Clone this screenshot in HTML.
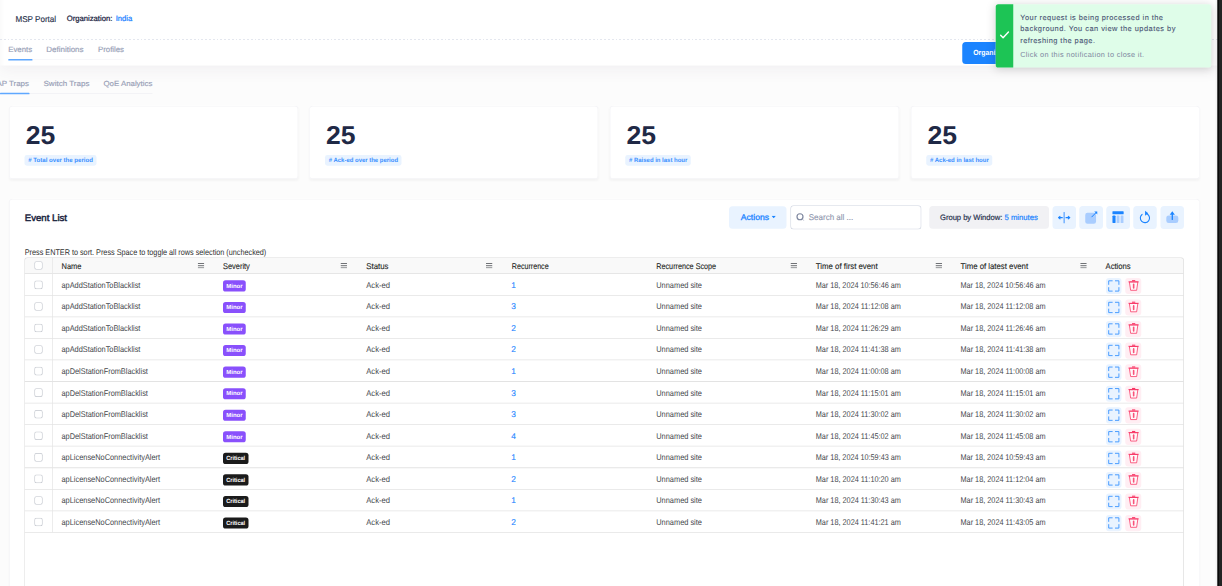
<!DOCTYPE html>
<html lang="en"><head><meta charset="utf-8"><title>MSP Portal - Events</title>
<style>
html,body{margin:0;padding:0;width:1222px;height:586px;overflow:hidden;background:#fcfcfc;}
body{font-family:"Liberation Sans",sans-serif;-webkit-font-smoothing:antialiased;}
#s{position:absolute;left:0;top:0;width:4888px;height:2344px;transform:scale(0.25);transform-origin:0 0;overflow:hidden;background:#fcfcfc;}
.b{position:absolute;box-sizing:border-box;display:block;}
.t{position:absolute;white-space:pre;line-height:1;display:block;transform-origin:0 100%;}
</style></head><body><div id="s">
<div class="b" style="left:0px;top:0px;width:4872px;height:262px;background:#fff;box-shadow:0 20px 56px rgba(82,63,105,.06);"></div>
<div class="b" style="left:0px;top:0px;width:18px;height:262px;background:linear-gradient(90deg,rgba(0,0,0,.018),rgba(0,0,0,0));"></div>
<div class="b" style="left:0px;top:156px;width:4872px;height:2.8px;background:repeating-linear-gradient(90deg,#dbdfe9 0 7.6px,transparent 7.6px 15.2px);"></div>
<span class="t" style="left:62.4px;top:59px;font-size:34px;color:#252f4a;transform:skewX(-0.3deg) scaleX(0.9479);-webkit-text-stroke:0.56px #252f4a;">MSP Portal</span>
<span class="t" style="left:267.2px;top:57.9px;font-size:31.2px;color:#1a2340;transform:skewX(-0.3deg) scaleX(0.9829);-webkit-text-stroke:0.96px #1a2340;">Organization:</span>
<span class="t" style="left:463.2px;top:57.9px;font-size:31.2px;color:#1b84ff;transform:skewX(-0.3deg) scaleX(0.9755);-webkit-text-stroke:0.96px #1b84ff;">India</span>
<div class="b" style="left:32.8px;top:237.6px;width:465.2px;height:2.8px;background:#f1f1f4;"></div>
<div class="b" style="left:32.8px;top:235.6px;width:97.2px;height:6.8px;background:#5fa8ff;border-radius:2.4px;"></div>
<span class="t" style="left:32.8px;top:182.1px;font-size:30.8px;color:#99a1b7;transform:skewX(-0.3deg) scaleX(1.0110);-webkit-text-stroke:0.64px #99a1b7;">Events</span>
<span class="t" style="left:184.8px;top:182.1px;font-size:30.8px;color:#99a1b7;transform:skewX(-0.3deg) scaleX(1.0375);-webkit-text-stroke:0.64px #99a1b7;">Definitions</span>
<span class="t" style="left:392px;top:182.1px;font-size:30.8px;color:#99a1b7;transform:skewX(-0.3deg) scaleX(1.0126);-webkit-text-stroke:0.64px #99a1b7;">Profiles</span>
<div class="b" style="left:0px;top:372.4px;width:610px;height:2.8px;background:#f1f1f4;"></div>
<div class="b" style="left:0px;top:370.8px;width:117.6px;height:6px;background:#5fa8ff;border-radius:2.4px;"></div>
<span class="t" style="left:-13.6px;top:318.7px;font-size:29.6px;color:#99a1b7;transform:skewX(-0.3deg) scaleX(1.0693);-webkit-text-stroke:0.64px #99a1b7;">AP Traps</span>
<span class="t" style="left:173.6px;top:318.7px;font-size:29.6px;color:#99a1b7;transform:skewX(-0.3deg) scaleX(1.0836);-webkit-text-stroke:0.64px #99a1b7;">Switch Traps</span>
<span class="t" style="left:414px;top:318.7px;font-size:29.6px;color:#99a1b7;transform:skewX(-0.3deg) scaleX(1.0594);-webkit-text-stroke:0.64px #99a1b7;">QoE Analytics</span>
<div class="b" style="left:3848.8px;top:168px;width:311.2px;height:88px;background:#1b84ff;border-radius:14px;"></div>
<span class="t" style="left:3892.8px;top:194.7px;font-size:29.6px;color:#fff;font-weight:700;transform:skewX(-0.3deg) scaleX(0.9287);">Organization</span>
<div class="b" style="left:35.6px;top:423px;width:1157.2px;height:293.4px;background:#fff;border-radius:14.4px;box-shadow:inset 0 0 0 2.6px #f3f3f6,0 6.4px 10.4px rgba(0,0,0,.035);"></div>
<span class="t" style="left:102.8px;top:488.9px;font-size:103.2px;color:#1f2946;font-weight:700;transform:skewX(-0.3deg) scaleX(1.0280);">25</span>
<div class="b" style="left:98px;top:620.4px;width:287.6px;height:42.8px;background:#e9f3ff;border-radius:9.6px;"></div>
<span class="t" style="left:113.2px;top:627.3px;font-size:24.4px;color:#3a90ff;font-weight:700;transform:skewX(-0.3deg) scaleX(0.9959);"># Total over the period</span>
<div class="b" style="left:1237.2px;top:423px;width:1156px;height:293.4px;background:#fff;border-radius:14.4px;box-shadow:inset 0 0 0 2.6px #f3f3f6,0 6.4px 10.4px rgba(0,0,0,.035);"></div>
<span class="t" style="left:1304.4px;top:488.9px;font-size:103.2px;color:#1f2946;font-weight:700;transform:skewX(-0.3deg) scaleX(1.0280);">25</span>
<div class="b" style="left:1299.6px;top:620.4px;width:306px;height:42.8px;background:#e9f3ff;border-radius:9.6px;"></div>
<span class="t" style="left:1314.8px;top:627.3px;font-size:24.4px;color:#3a90ff;font-weight:700;transform:skewX(-0.3deg) scaleX(0.9766);"># Ack-ed over the period</span>
<div class="b" style="left:2438.8px;top:423px;width:1158px;height:293.4px;background:#fff;border-radius:14.4px;box-shadow:inset 0 0 0 2.6px #f3f3f6,0 6.4px 10.4px rgba(0,0,0,.035);"></div>
<span class="t" style="left:2506px;top:488.9px;font-size:103.2px;color:#1f2946;font-weight:700;transform:skewX(-0.3deg) scaleX(1.0280);">25</span>
<div class="b" style="left:2501.2px;top:620.4px;width:262px;height:42.8px;background:#e9f3ff;border-radius:9.6px;"></div>
<span class="t" style="left:2516.4px;top:627.3px;font-size:24.4px;color:#3a90ff;font-weight:700;transform:skewX(-0.3deg) scaleX(0.9772);"># Raised in last hour</span>
<div class="b" style="left:3642.8px;top:423px;width:1156px;height:293.4px;background:#fff;border-radius:14.4px;box-shadow:inset 0 0 0 2.6px #f3f3f6,0 6.4px 10.4px rgba(0,0,0,.035);"></div>
<span class="t" style="left:3710px;top:488.9px;font-size:103.2px;color:#1f2946;font-weight:700;transform:skewX(-0.3deg) scaleX(1.0280);">25</span>
<div class="b" style="left:3705.2px;top:620.4px;width:264px;height:42.8px;background:#e9f3ff;border-radius:9.6px;"></div>
<span class="t" style="left:3720.4px;top:627.3px;font-size:24.4px;color:#3a90ff;font-weight:700;transform:skewX(-0.3deg) scaleX(0.9838);"># Ack-ed in last hour</span>
<div class="b" style="left:35.6px;top:794.8px;width:4763.2px;height:1605.2px;background:#fff;border-radius:14.4px;box-shadow:inset 0 0 0 2.6px #f3f3f6,0 6.4px 10.4px rgba(0,0,0,.035);"></div>
<span class="t" style="left:98.8px;top:852.2px;font-size:37.6px;color:#1b2540;transform:skewX(-0.3deg) scaleX(1.0248);-webkit-text-stroke:1.8px #1b2540;">Event List</span>
<div class="b" style="left:2916px;top:824.8px;width:230.4px;height:90.4px;background:#e9f3ff;border-radius:14px;"></div>
<span class="t" style="left:2962.8px;top:851.9px;font-size:33.2px;color:#1b84ff;transform:skewX(-0.3deg) scaleX(1.0397);-webkit-text-stroke:1.2px #1b84ff;">Actions</span>
<svg class="b" style="left:3086.4px;top:863.2px;width:17.6px;height:10.4px;" viewBox="0 0 44 26"><path d="M0 0H44L22 26Z" fill="#1b84ff"/></svg>
<div class="b" style="left:3160.8px;top:821.2px;width:525.6px;height:97.2px;background:#fff;border-radius:14px;box-shadow:inset 0 0 0 3.2px #d3d8e3;"></div>
<svg class="b" style="left:3184px;top:851.2px;width:34.4px;height:34.4px;" viewBox="0 0 86 86"><circle cx="40" cy="40" r="30" fill="none" stroke="#7e879f" stroke-width="12"/><path d="M63 63L76 76" stroke="#aab0c3" stroke-width="9" stroke-linecap="round"/></svg>
<span class="t" style="left:3234.8px;top:851.9px;font-size:33.2px;color:#8f97ae;transform:skewX(-0.3deg) scaleX(0.9646);-webkit-text-stroke:0.48px #8f97ae;">Search all ...</span>
<div class="b" style="left:3716.8px;top:823.6px;width:478.8px;height:91.6px;background:#f1f1f4;border-radius:14px;"></div>
<span class="t" style="left:3760px;top:853.9px;font-size:31.2px;color:#2a3450;transform:skewX(-0.3deg) scaleX(0.9710);-webkit-text-stroke:0.8px #2a3450;">Group by Window:</span>
<span class="t" style="left:4017.6px;top:853.9px;font-size:31.2px;color:#1b84ff;transform:skewX(-0.3deg) scaleX(0.9877);-webkit-text-stroke:0.8px #1b84ff;">5 minutes</span>
<div class="b" style="left:4209.6px;top:824px;width:94.4px;height:92px;background:#e9f3ff;border-radius:14px;"></div>
<div class="b" style="left:4317.2px;top:824px;width:94.4px;height:92px;background:#e9f3ff;border-radius:14px;"></div>
<div class="b" style="left:4425.2px;top:824px;width:94.4px;height:92px;background:#e9f3ff;border-radius:14px;"></div>
<div class="b" style="left:4532.8px;top:824px;width:94.4px;height:92px;background:#e9f3ff;border-radius:14px;"></div>
<div class="b" style="left:4641.6px;top:824px;width:94.4px;height:92px;background:#e9f3ff;border-radius:14px;"></div>
<svg class="b" style="left:4209.6px;top:824.8px;width:93.6px;height:91.2px;" viewBox="0 0 234 228"><rect x="110" y="57" width="13" height="114" rx="3" fill="#62a7ff"/><path d="M98 114H62M75 101L60 114L75 127" fill="none" stroke="#1b84ff" stroke-width="11" stroke-linecap="round" stroke-linejoin="round"/><path d="M135 114H171M158 101L173 114L158 127" fill="none" stroke="#1b84ff" stroke-width="11" stroke-linecap="round" stroke-linejoin="round"/></svg>
<svg class="b" style="left:4317.2px;top:824.8px;width:93.6px;height:91.2px;" viewBox="0 0 234 228"><rect x="60" y="66" width="108" height="108" rx="22" fill="#a9cdff"/><path d="M126 106L172 60" stroke="#1b84ff" stroke-width="10" stroke-linecap="round"/><path d="M150 52H180V82Z" fill="#1b84ff"/></svg>
<svg class="b" style="left:4425.2px;top:824.8px;width:93.6px;height:91.2px;" viewBox="0 0 234 228"><rect x="62" y="50" width="112" height="30" rx="5" fill="#1b84ff"/><rect x="62" y="92" width="31" height="76" rx="9" fill="#1b84ff"/><rect x="104" y="92" width="28" height="76" rx="5" fill="#a9cdff"/><rect x="144" y="92" width="28" height="76" rx="5" fill="#a9cdff"/></svg>
<svg class="b" style="left:4532.8px;top:824.8px;width:93.6px;height:91.2px;" viewBox="0 0 234 228"><path d="M140 78A46 46 0 1 1 88 82" fill="none" stroke="#1b84ff" stroke-width="11" stroke-linecap="round"/><path d="M118 46L150 70L118 94Z" fill="#1b84ff"/></svg>
<svg class="b" style="left:4641.6px;top:824.8px;width:93.6px;height:91.2px;" viewBox="0 0 234 228"><rect x="58" y="92" width="120" height="76" rx="24" fill="#a9cdff"/><path d="M118 132V70" stroke="#1b84ff" stroke-width="13" stroke-linecap="round"/><path d="M92 86L118 50L144 86Z" fill="#1b84ff"/></svg>
<span class="t" style="left:98.8px;top:991.9px;font-size:33.2px;color:#2f2f2f;transform:skewX(-0.3deg) scaleX(0.8743);">Press ENTER to sort. Press Space to toggle all rows selection (unchecked)</span>
<div class="b" style="left:97.6px;top:1029.6px;width:4637.4px;height:1450.4px;background:#fff;border-radius:12.8px;overflow:hidden;"><div class="b" style="left:0;top:0;width:100%;height:65px;background:#f9f9f9;"></div><div class="b" style="left:0;top:63.4px;width:100%;height:3.2px;background:#dfdfdf;"></div><div class="b" style="left:110.08px;top:0;width:3.04px;height:1099.64px;background:#e6e6e6;"></div><div class="b" style="left:0;top:150.02px;width:100%;height:3.2px;background:#e3e3e3;"></div><div class="b" style="left:0;top:236.24px;width:100%;height:3.2px;background:#e3e3e3;"></div><div class="b" style="left:0;top:322.46px;width:100%;height:3.2px;background:#e3e3e3;"></div><div class="b" style="left:0;top:408.68px;width:100%;height:3.2px;background:#e3e3e3;"></div><div class="b" style="left:0;top:494.9px;width:100%;height:3.2px;background:#e3e3e3;"></div><div class="b" style="left:0;top:581.12px;width:100%;height:3.2px;background:#e3e3e3;"></div><div class="b" style="left:0;top:667.34px;width:100%;height:3.2px;background:#e3e3e3;"></div><div class="b" style="left:0;top:753.56px;width:100%;height:3.2px;background:#e3e3e3;"></div><div class="b" style="left:0;top:839.78px;width:100%;height:3.2px;background:#e3e3e3;"></div><div class="b" style="left:0;top:926px;width:100%;height:3.2px;background:#e3e3e3;"></div><div class="b" style="left:0;top:1012.22px;width:100%;height:3.2px;background:#e3e3e3;"></div><div class="b" style="left:0;top:1098.44px;width:100%;height:3.2px;background:#e3e3e3;"></div></div>
<div class="b" style="left:96.8px;top:1028.8px;width:4639px;height:1451.2px;border-radius:13.6px;box-shadow:inset 0 0 0 3px #dfdfdf;"></div>
<div class="b" style="left:136.6px;top:1045px;width:34.4px;height:34.4px;background:#fff;border-radius:8.8px;box-shadow:inset 0 0 0 3.2px #c3c7ce;"></div>
<span class="t" style="left:246.4px;top:1047.9px;font-size:33.2px;color:#1c1f23;transform:skewX(-0.3deg) scaleX(0.8988);-webkit-text-stroke:0.4px #1c1f23;">Name</span>
<span class="t" style="left:892px;top:1047.9px;font-size:33.2px;color:#1c1f23;transform:skewX(-0.3deg) scaleX(0.8939);-webkit-text-stroke:0.4px #1c1f23;">Severity</span>
<span class="t" style="left:1465.2px;top:1047.9px;font-size:33.2px;color:#1c1f23;transform:skewX(-0.3deg) scaleX(0.9435);-webkit-text-stroke:0.4px #1c1f23;">Status</span>
<span class="t" style="left:2046.8px;top:1047.9px;font-size:33.2px;color:#1c1f23;transform:skewX(-0.3deg) scaleX(0.8601);-webkit-text-stroke:0.4px #1c1f23;">Recurrence</span>
<span class="t" style="left:2625.2px;top:1047.9px;font-size:33.2px;color:#1c1f23;transform:skewX(-0.3deg) scaleX(0.8714);-webkit-text-stroke:0.4px #1c1f23;">Recurrence Scope</span>
<span class="t" style="left:3262.8px;top:1047.9px;font-size:33.2px;color:#1c1f23;transform:skewX(-0.3deg) scaleX(0.9429);-webkit-text-stroke:0.4px #1c1f23;">Time of first event</span>
<span class="t" style="left:3841.6px;top:1047.9px;font-size:33.2px;color:#1c1f23;transform:skewX(-0.3deg) scaleX(0.9373);-webkit-text-stroke:0.4px #1c1f23;">Time of latest event</span>
<span class="t" style="left:4421.6px;top:1047.9px;font-size:33.2px;color:#1c1f23;transform:skewX(-0.3deg) scaleX(0.9258);-webkit-text-stroke:0.4px #1c1f23;">Actions</span>
<svg class="b" style="left:791.2px;top:1051.6px;width:26px;height:21.6px;" viewBox="0 0 65 54"><path d="M0 5H65M0 27H65M0 49H65" stroke="#4a4d52" stroke-width="8"/></svg>
<svg class="b" style="left:1361.6px;top:1051.6px;width:26px;height:21.6px;" viewBox="0 0 65 54"><path d="M0 5H65M0 27H65M0 49H65" stroke="#4a4d52" stroke-width="8"/></svg>
<svg class="b" style="left:1944px;top:1051.6px;width:26px;height:21.6px;" viewBox="0 0 65 54"><path d="M0 5H65M0 27H65M0 49H65" stroke="#4a4d52" stroke-width="8"/></svg>
<svg class="b" style="left:3162.4px;top:1051.6px;width:26px;height:21.6px;" viewBox="0 0 65 54"><path d="M0 5H65M0 27H65M0 49H65" stroke="#4a4d52" stroke-width="8"/></svg>
<svg class="b" style="left:3742px;top:1051.6px;width:26px;height:21.6px;" viewBox="0 0 65 54"><path d="M0 5H65M0 27H65M0 49H65" stroke="#4a4d52" stroke-width="8"/></svg>
<svg class="b" style="left:4320.8px;top:1051.6px;width:26px;height:21.6px;" viewBox="0 0 65 54"><path d="M0 5H65M0 27H65M0 49H65" stroke="#4a4d52" stroke-width="8"/></svg>
<div class="b" style="left:136.6px;top:1122.39px;width:34.4px;height:34.4px;background:#fff;border-radius:8.8px;box-shadow:inset 0 0 0 3.2px #c3c7ce;"></div>
<span class="t" style="left:246.4px;top:1123.9px;font-size:33.2px;color:#44474c;transform:skewX(-0.3deg) scaleX(0.8860);">apAddStationToBlacklist</span>
<div class="b" style="left:891.6px;top:1121.4px;width:91.2px;height:44.4px;background:#8950fc;border-radius:10.4px;"></div>
<span class="t" style="left:905.2px;top:1131.5px;font-size:24px;color:#fff;font-weight:700;transform:skewX(-0.3deg) scaleX(0.9982);">Minor</span>
<span class="t" style="left:1465.2px;top:1123.9px;font-size:33.2px;color:#44474c;transform:skewX(-0.3deg) scaleX(0.9175);">Ack-ed</span>
<span class="t" style="left:2045.2px;top:1123.9px;font-size:33.2px;color:#1b84ff;transform:skewX(-0.3deg);-webkit-text-stroke:0.48px #1b84ff;">1</span>
<span class="t" style="left:2625.2px;top:1123.9px;font-size:33.2px;color:#44474c;transform:skewX(-0.3deg) scaleX(0.8924);">Unnamed site</span>
<span class="t" style="left:3262.8px;top:1123.9px;font-size:33.2px;color:#44474c;transform:skewX(-0.3deg) scaleX(0.8741);">Mar 18, 2024 10:56:46 am</span>
<span class="t" style="left:3841.6px;top:1123.9px;font-size:33.2px;color:#44474c;transform:skewX(-0.3deg) scaleX(0.8741);">Mar 18, 2024 10:56:46 am</span>
<div class="b" style="left:4424px;top:1111.8px;width:62.4px;height:64.4px;background:#e9f3ff;border-radius:12px;"></div>
<svg class="b" style="left:4424px;top:1111.8px;width:62.4px;height:64px;" viewBox="0 0 156 160"><path d="M27 68V28H66M90 28H129V68M129 92V131H90M66 131H27V92" fill="none" stroke="#4299ff" stroke-width="9.5"/></svg>
<div class="b" style="left:4500.8px;top:1111.8px;width:64.4px;height:64.4px;background:#ffeef3;border-radius:12px;"></div>
<svg class="b" style="left:4500.8px;top:1111.8px;width:64px;height:64px;" viewBox="0 0 160 160"><path d="M41 40H126L114 123H54Z" fill="#fff" fill-opacity=".6" stroke="#f8305f" stroke-width="7.5" stroke-linejoin="round"/><path d="M36 38H131" stroke="#f8285a" stroke-width="8" stroke-linecap="round"/><path d="M72 27H96" stroke="#f8285a" stroke-width="10" stroke-linecap="round"/><path d="M84 64V100" stroke="#f9527a" stroke-width="16" stroke-linecap="round"/></svg>
<div class="b" style="left:136.6px;top:1208.61px;width:34.4px;height:34.4px;background:#fff;border-radius:8.8px;box-shadow:inset 0 0 0 3.2px #c3c7ce;"></div>
<span class="t" style="left:246.4px;top:1207.9px;font-size:33.2px;color:#44474c;transform:skewX(-0.3deg) scaleX(0.8860);">apAddStationToBlacklist</span>
<div class="b" style="left:891.6px;top:1207.62px;width:91.2px;height:44.4px;background:#8950fc;border-radius:10.4px;"></div>
<span class="t" style="left:905.2px;top:1215.5px;font-size:24px;color:#fff;font-weight:700;transform:skewX(-0.3deg) scaleX(0.9982);">Minor</span>
<span class="t" style="left:1465.2px;top:1207.9px;font-size:33.2px;color:#44474c;transform:skewX(-0.3deg) scaleX(0.9175);">Ack-ed</span>
<span class="t" style="left:2045.2px;top:1207.9px;font-size:33.2px;color:#1b84ff;transform:skewX(-0.3deg);-webkit-text-stroke:0.48px #1b84ff;">3</span>
<span class="t" style="left:2625.2px;top:1207.9px;font-size:33.2px;color:#44474c;transform:skewX(-0.3deg) scaleX(0.8924);">Unnamed site</span>
<span class="t" style="left:3262.8px;top:1207.9px;font-size:33.2px;color:#44474c;transform:skewX(-0.3deg) scaleX(0.8796);">Mar 18, 2024 11:12:08 am</span>
<span class="t" style="left:3841.6px;top:1207.9px;font-size:33.2px;color:#44474c;transform:skewX(-0.3deg) scaleX(0.8796);">Mar 18, 2024 11:12:08 am</span>
<div class="b" style="left:4424px;top:1198.02px;width:62.4px;height:64.4px;background:#e9f3ff;border-radius:12px;"></div>
<svg class="b" style="left:4424px;top:1198.02px;width:62.4px;height:64px;" viewBox="0 0 156 160"><path d="M27 68V28H66M90 28H129V68M129 92V131H90M66 131H27V92" fill="none" stroke="#4299ff" stroke-width="9.5"/></svg>
<div class="b" style="left:4500.8px;top:1198.02px;width:64.4px;height:64.4px;background:#ffeef3;border-radius:12px;"></div>
<svg class="b" style="left:4500.8px;top:1198.02px;width:64px;height:64px;" viewBox="0 0 160 160"><path d="M41 40H126L114 123H54Z" fill="#fff" fill-opacity=".6" stroke="#f8305f" stroke-width="7.5" stroke-linejoin="round"/><path d="M36 38H131" stroke="#f8285a" stroke-width="8" stroke-linecap="round"/><path d="M72 27H96" stroke="#f8285a" stroke-width="10" stroke-linecap="round"/><path d="M84 64V100" stroke="#f9527a" stroke-width="16" stroke-linecap="round"/></svg>
<div class="b" style="left:136.6px;top:1294.83px;width:34.4px;height:34.4px;background:#fff;border-radius:8.8px;box-shadow:inset 0 0 0 3.2px #c3c7ce;"></div>
<span class="t" style="left:246.4px;top:1295.9px;font-size:33.2px;color:#44474c;transform:skewX(-0.3deg) scaleX(0.8860);">apAddStationToBlacklist</span>
<div class="b" style="left:891.6px;top:1293.84px;width:91.2px;height:44.4px;background:#8950fc;border-radius:10.4px;"></div>
<span class="t" style="left:905.2px;top:1303.5px;font-size:24px;color:#fff;font-weight:700;transform:skewX(-0.3deg) scaleX(0.9982);">Minor</span>
<span class="t" style="left:1465.2px;top:1295.9px;font-size:33.2px;color:#44474c;transform:skewX(-0.3deg) scaleX(0.9175);">Ack-ed</span>
<span class="t" style="left:2045.2px;top:1295.9px;font-size:33.2px;color:#1b84ff;transform:skewX(-0.3deg);-webkit-text-stroke:0.48px #1b84ff;">2</span>
<span class="t" style="left:2625.2px;top:1295.9px;font-size:33.2px;color:#44474c;transform:skewX(-0.3deg) scaleX(0.8924);">Unnamed site</span>
<span class="t" style="left:3262.8px;top:1295.9px;font-size:33.2px;color:#44474c;transform:skewX(-0.3deg) scaleX(0.8796);">Mar 18, 2024 11:26:29 am</span>
<span class="t" style="left:3841.6px;top:1295.9px;font-size:33.2px;color:#44474c;transform:skewX(-0.3deg) scaleX(0.8796);">Mar 18, 2024 11:26:46 am</span>
<div class="b" style="left:4424px;top:1284.24px;width:62.4px;height:64.4px;background:#e9f3ff;border-radius:12px;"></div>
<svg class="b" style="left:4424px;top:1284.24px;width:62.4px;height:64px;" viewBox="0 0 156 160"><path d="M27 68V28H66M90 28H129V68M129 92V131H90M66 131H27V92" fill="none" stroke="#4299ff" stroke-width="9.5"/></svg>
<div class="b" style="left:4500.8px;top:1284.24px;width:64.4px;height:64.4px;background:#ffeef3;border-radius:12px;"></div>
<svg class="b" style="left:4500.8px;top:1284.24px;width:64px;height:64px;" viewBox="0 0 160 160"><path d="M41 40H126L114 123H54Z" fill="#fff" fill-opacity=".6" stroke="#f8305f" stroke-width="7.5" stroke-linejoin="round"/><path d="M36 38H131" stroke="#f8285a" stroke-width="8" stroke-linecap="round"/><path d="M72 27H96" stroke="#f8285a" stroke-width="10" stroke-linecap="round"/><path d="M84 64V100" stroke="#f9527a" stroke-width="16" stroke-linecap="round"/></svg>
<div class="b" style="left:136.6px;top:1381.05px;width:34.4px;height:34.4px;background:#fff;border-radius:8.8px;box-shadow:inset 0 0 0 3.2px #c3c7ce;"></div>
<span class="t" style="left:246.4px;top:1379.9px;font-size:33.2px;color:#44474c;transform:skewX(-0.3deg) scaleX(0.8860);">apAddStationToBlacklist</span>
<div class="b" style="left:891.6px;top:1380.06px;width:91.2px;height:44.4px;background:#8950fc;border-radius:10.4px;"></div>
<span class="t" style="left:905.2px;top:1387.5px;font-size:24px;color:#fff;font-weight:700;transform:skewX(-0.3deg) scaleX(0.9982);">Minor</span>
<span class="t" style="left:1465.2px;top:1379.9px;font-size:33.2px;color:#44474c;transform:skewX(-0.3deg) scaleX(0.9175);">Ack-ed</span>
<span class="t" style="left:2045.2px;top:1379.9px;font-size:33.2px;color:#1b84ff;transform:skewX(-0.3deg);-webkit-text-stroke:0.48px #1b84ff;">2</span>
<span class="t" style="left:2625.2px;top:1379.9px;font-size:33.2px;color:#44474c;transform:skewX(-0.3deg) scaleX(0.8924);">Unnamed site</span>
<span class="t" style="left:3262.8px;top:1379.9px;font-size:33.2px;color:#44474c;transform:skewX(-0.3deg) scaleX(0.8796);">Mar 18, 2024 11:41:38 am</span>
<span class="t" style="left:3841.6px;top:1379.9px;font-size:33.2px;color:#44474c;transform:skewX(-0.3deg) scaleX(0.8796);">Mar 18, 2024 11:41:38 am</span>
<div class="b" style="left:4424px;top:1370.46px;width:62.4px;height:64.4px;background:#e9f3ff;border-radius:12px;"></div>
<svg class="b" style="left:4424px;top:1370.46px;width:62.4px;height:64px;" viewBox="0 0 156 160"><path d="M27 68V28H66M90 28H129V68M129 92V131H90M66 131H27V92" fill="none" stroke="#4299ff" stroke-width="9.5"/></svg>
<div class="b" style="left:4500.8px;top:1370.46px;width:64.4px;height:64.4px;background:#ffeef3;border-radius:12px;"></div>
<svg class="b" style="left:4500.8px;top:1370.46px;width:64px;height:64px;" viewBox="0 0 160 160"><path d="M41 40H126L114 123H54Z" fill="#fff" fill-opacity=".6" stroke="#f8305f" stroke-width="7.5" stroke-linejoin="round"/><path d="M36 38H131" stroke="#f8285a" stroke-width="8" stroke-linecap="round"/><path d="M72 27H96" stroke="#f8285a" stroke-width="10" stroke-linecap="round"/><path d="M84 64V100" stroke="#f9527a" stroke-width="16" stroke-linecap="round"/></svg>
<div class="b" style="left:136.6px;top:1467.27px;width:34.4px;height:34.4px;background:#fff;border-radius:8.8px;box-shadow:inset 0 0 0 3.2px #c3c7ce;"></div>
<span class="t" style="left:246.4px;top:1467.9px;font-size:33.2px;color:#44474c;transform:skewX(-0.3deg) scaleX(0.8877);">apDelStationFromBlacklist</span>
<div class="b" style="left:891.6px;top:1466.28px;width:91.2px;height:44.4px;background:#8950fc;border-radius:10.4px;"></div>
<span class="t" style="left:905.2px;top:1475.5px;font-size:24px;color:#fff;font-weight:700;transform:skewX(-0.3deg) scaleX(0.9982);">Minor</span>
<span class="t" style="left:1465.2px;top:1467.9px;font-size:33.2px;color:#44474c;transform:skewX(-0.3deg) scaleX(0.9175);">Ack-ed</span>
<span class="t" style="left:2045.2px;top:1467.9px;font-size:33.2px;color:#1b84ff;transform:skewX(-0.3deg);-webkit-text-stroke:0.48px #1b84ff;">1</span>
<span class="t" style="left:2625.2px;top:1467.9px;font-size:33.2px;color:#44474c;transform:skewX(-0.3deg) scaleX(0.8924);">Unnamed site</span>
<span class="t" style="left:3262.8px;top:1467.9px;font-size:33.2px;color:#44474c;transform:skewX(-0.3deg) scaleX(0.8796);">Mar 18, 2024 11:00:08 am</span>
<span class="t" style="left:3841.6px;top:1467.9px;font-size:33.2px;color:#44474c;transform:skewX(-0.3deg) scaleX(0.8796);">Mar 18, 2024 11:00:08 am</span>
<div class="b" style="left:4424px;top:1456.68px;width:62.4px;height:64.4px;background:#e9f3ff;border-radius:12px;"></div>
<svg class="b" style="left:4424px;top:1456.68px;width:62.4px;height:64px;" viewBox="0 0 156 160"><path d="M27 68V28H66M90 28H129V68M129 92V131H90M66 131H27V92" fill="none" stroke="#4299ff" stroke-width="9.5"/></svg>
<div class="b" style="left:4500.8px;top:1456.68px;width:64.4px;height:64.4px;background:#ffeef3;border-radius:12px;"></div>
<svg class="b" style="left:4500.8px;top:1456.68px;width:64px;height:64px;" viewBox="0 0 160 160"><path d="M41 40H126L114 123H54Z" fill="#fff" fill-opacity=".6" stroke="#f8305f" stroke-width="7.5" stroke-linejoin="round"/><path d="M36 38H131" stroke="#f8285a" stroke-width="8" stroke-linecap="round"/><path d="M72 27H96" stroke="#f8285a" stroke-width="10" stroke-linecap="round"/><path d="M84 64V100" stroke="#f9527a" stroke-width="16" stroke-linecap="round"/></svg>
<div class="b" style="left:136.6px;top:1553.49px;width:34.4px;height:34.4px;background:#fff;border-radius:8.8px;box-shadow:inset 0 0 0 3.2px #c3c7ce;"></div>
<span class="t" style="left:246.4px;top:1555.9px;font-size:33.2px;color:#44474c;transform:skewX(-0.3deg) scaleX(0.8877);">apDelStationFromBlacklist</span>
<div class="b" style="left:891.6px;top:1552.5px;width:91.2px;height:44.4px;background:#8950fc;border-radius:10.4px;"></div>
<span class="t" style="left:905.2px;top:1559.5px;font-size:24px;color:#fff;font-weight:700;transform:skewX(-0.3deg) scaleX(0.9982);">Minor</span>
<span class="t" style="left:1465.2px;top:1555.9px;font-size:33.2px;color:#44474c;transform:skewX(-0.3deg) scaleX(0.9175);">Ack-ed</span>
<span class="t" style="left:2045.2px;top:1555.9px;font-size:33.2px;color:#1b84ff;transform:skewX(-0.3deg);-webkit-text-stroke:0.48px #1b84ff;">3</span>
<span class="t" style="left:2625.2px;top:1555.9px;font-size:33.2px;color:#44474c;transform:skewX(-0.3deg) scaleX(0.8924);">Unnamed site</span>
<span class="t" style="left:3262.8px;top:1555.9px;font-size:33.2px;color:#44474c;transform:skewX(-0.3deg) scaleX(0.8796);">Mar 18, 2024 11:15:01 am</span>
<span class="t" style="left:3841.6px;top:1555.9px;font-size:33.2px;color:#44474c;transform:skewX(-0.3deg) scaleX(0.8796);">Mar 18, 2024 11:15:01 am</span>
<div class="b" style="left:4424px;top:1542.9px;width:62.4px;height:64.4px;background:#e9f3ff;border-radius:12px;"></div>
<svg class="b" style="left:4424px;top:1542.9px;width:62.4px;height:64px;" viewBox="0 0 156 160"><path d="M27 68V28H66M90 28H129V68M129 92V131H90M66 131H27V92" fill="none" stroke="#4299ff" stroke-width="9.5"/></svg>
<div class="b" style="left:4500.8px;top:1542.9px;width:64.4px;height:64.4px;background:#ffeef3;border-radius:12px;"></div>
<svg class="b" style="left:4500.8px;top:1542.9px;width:64px;height:64px;" viewBox="0 0 160 160"><path d="M41 40H126L114 123H54Z" fill="#fff" fill-opacity=".6" stroke="#f8305f" stroke-width="7.5" stroke-linejoin="round"/><path d="M36 38H131" stroke="#f8285a" stroke-width="8" stroke-linecap="round"/><path d="M72 27H96" stroke="#f8285a" stroke-width="10" stroke-linecap="round"/><path d="M84 64V100" stroke="#f9527a" stroke-width="16" stroke-linecap="round"/></svg>
<div class="b" style="left:136.6px;top:1639.71px;width:34.4px;height:34.4px;background:#fff;border-radius:8.8px;box-shadow:inset 0 0 0 3.2px #c3c7ce;"></div>
<span class="t" style="left:246.4px;top:1639.9px;font-size:33.2px;color:#44474c;transform:skewX(-0.3deg) scaleX(0.8877);">apDelStationFromBlacklist</span>
<div class="b" style="left:891.6px;top:1638.72px;width:91.2px;height:44.4px;background:#8950fc;border-radius:10.4px;"></div>
<span class="t" style="left:905.2px;top:1647.5px;font-size:24px;color:#fff;font-weight:700;transform:skewX(-0.3deg) scaleX(0.9982);">Minor</span>
<span class="t" style="left:1465.2px;top:1639.9px;font-size:33.2px;color:#44474c;transform:skewX(-0.3deg) scaleX(0.9175);">Ack-ed</span>
<span class="t" style="left:2045.2px;top:1639.9px;font-size:33.2px;color:#1b84ff;transform:skewX(-0.3deg);-webkit-text-stroke:0.48px #1b84ff;">3</span>
<span class="t" style="left:2625.2px;top:1639.9px;font-size:33.2px;color:#44474c;transform:skewX(-0.3deg) scaleX(0.8924);">Unnamed site</span>
<span class="t" style="left:3262.8px;top:1639.9px;font-size:33.2px;color:#44474c;transform:skewX(-0.3deg) scaleX(0.8796);">Mar 18, 2024 11:30:02 am</span>
<span class="t" style="left:3841.6px;top:1639.9px;font-size:33.2px;color:#44474c;transform:skewX(-0.3deg) scaleX(0.8796);">Mar 18, 2024 11:30:02 am</span>
<div class="b" style="left:4424px;top:1629.12px;width:62.4px;height:64.4px;background:#e9f3ff;border-radius:12px;"></div>
<svg class="b" style="left:4424px;top:1629.12px;width:62.4px;height:64px;" viewBox="0 0 156 160"><path d="M27 68V28H66M90 28H129V68M129 92V131H90M66 131H27V92" fill="none" stroke="#4299ff" stroke-width="9.5"/></svg>
<div class="b" style="left:4500.8px;top:1629.12px;width:64.4px;height:64.4px;background:#ffeef3;border-radius:12px;"></div>
<svg class="b" style="left:4500.8px;top:1629.12px;width:64px;height:64px;" viewBox="0 0 160 160"><path d="M41 40H126L114 123H54Z" fill="#fff" fill-opacity=".6" stroke="#f8305f" stroke-width="7.5" stroke-linejoin="round"/><path d="M36 38H131" stroke="#f8285a" stroke-width="8" stroke-linecap="round"/><path d="M72 27H96" stroke="#f8285a" stroke-width="10" stroke-linecap="round"/><path d="M84 64V100" stroke="#f9527a" stroke-width="16" stroke-linecap="round"/></svg>
<div class="b" style="left:136.6px;top:1725.93px;width:34.4px;height:34.4px;background:#fff;border-radius:8.8px;box-shadow:inset 0 0 0 3.2px #c3c7ce;"></div>
<span class="t" style="left:246.4px;top:1727.9px;font-size:33.2px;color:#44474c;transform:skewX(-0.3deg) scaleX(0.8877);">apDelStationFromBlacklist</span>
<div class="b" style="left:891.6px;top:1724.94px;width:91.2px;height:44.4px;background:#8950fc;border-radius:10.4px;"></div>
<span class="t" style="left:905.2px;top:1735.5px;font-size:24px;color:#fff;font-weight:700;transform:skewX(-0.3deg) scaleX(0.9982);">Minor</span>
<span class="t" style="left:1465.2px;top:1727.9px;font-size:33.2px;color:#44474c;transform:skewX(-0.3deg) scaleX(0.9175);">Ack-ed</span>
<span class="t" style="left:2045.2px;top:1727.9px;font-size:33.2px;color:#1b84ff;transform:skewX(-0.3deg);-webkit-text-stroke:0.48px #1b84ff;">4</span>
<span class="t" style="left:2625.2px;top:1727.9px;font-size:33.2px;color:#44474c;transform:skewX(-0.3deg) scaleX(0.8924);">Unnamed site</span>
<span class="t" style="left:3262.8px;top:1727.9px;font-size:33.2px;color:#44474c;transform:skewX(-0.3deg) scaleX(0.8796);">Mar 18, 2024 11:45:02 am</span>
<span class="t" style="left:3841.6px;top:1727.9px;font-size:33.2px;color:#44474c;transform:skewX(-0.3deg) scaleX(0.8796);">Mar 18, 2024 11:45:08 am</span>
<div class="b" style="left:4424px;top:1715.34px;width:62.4px;height:64.4px;background:#e9f3ff;border-radius:12px;"></div>
<svg class="b" style="left:4424px;top:1715.34px;width:62.4px;height:64px;" viewBox="0 0 156 160"><path d="M27 68V28H66M90 28H129V68M129 92V131H90M66 131H27V92" fill="none" stroke="#4299ff" stroke-width="9.5"/></svg>
<div class="b" style="left:4500.8px;top:1715.34px;width:64.4px;height:64.4px;background:#ffeef3;border-radius:12px;"></div>
<svg class="b" style="left:4500.8px;top:1715.34px;width:64px;height:64px;" viewBox="0 0 160 160"><path d="M41 40H126L114 123H54Z" fill="#fff" fill-opacity=".6" stroke="#f8305f" stroke-width="7.5" stroke-linejoin="round"/><path d="M36 38H131" stroke="#f8285a" stroke-width="8" stroke-linecap="round"/><path d="M72 27H96" stroke="#f8285a" stroke-width="10" stroke-linecap="round"/><path d="M84 64V100" stroke="#f9527a" stroke-width="16" stroke-linecap="round"/></svg>
<div class="b" style="left:136.6px;top:1812.15px;width:34.4px;height:34.4px;background:#fff;border-radius:8.8px;box-shadow:inset 0 0 0 3.2px #c3c7ce;"></div>
<span class="t" style="left:246.4px;top:1811.9px;font-size:33.2px;color:#44474c;transform:skewX(-0.3deg) scaleX(0.8905);">apLicenseNoConnectivityAlert</span>
<div class="b" style="left:891.6px;top:1811.16px;width:102.4px;height:44.4px;background:#1b1b1b;border-radius:10.4px;"></div>
<span class="t" style="left:905.2px;top:1819.5px;font-size:24px;color:#fff;font-weight:700;transform:skewX(-0.3deg) scaleX(0.9292);">Critical</span>
<span class="t" style="left:1465.2px;top:1811.9px;font-size:33.2px;color:#44474c;transform:skewX(-0.3deg) scaleX(0.9175);">Ack-ed</span>
<span class="t" style="left:2045.2px;top:1811.9px;font-size:33.2px;color:#1b84ff;transform:skewX(-0.3deg);-webkit-text-stroke:0.48px #1b84ff;">1</span>
<span class="t" style="left:2625.2px;top:1811.9px;font-size:33.2px;color:#44474c;transform:skewX(-0.3deg) scaleX(0.8924);">Unnamed site</span>
<span class="t" style="left:3262.8px;top:1811.9px;font-size:33.2px;color:#44474c;transform:skewX(-0.3deg) scaleX(0.8741);">Mar 18, 2024 10:59:43 am</span>
<span class="t" style="left:3841.6px;top:1811.9px;font-size:33.2px;color:#44474c;transform:skewX(-0.3deg) scaleX(0.8741);">Mar 18, 2024 10:59:43 am</span>
<div class="b" style="left:4424px;top:1801.56px;width:62.4px;height:64.4px;background:#e9f3ff;border-radius:12px;"></div>
<svg class="b" style="left:4424px;top:1801.56px;width:62.4px;height:64px;" viewBox="0 0 156 160"><path d="M27 68V28H66M90 28H129V68M129 92V131H90M66 131H27V92" fill="none" stroke="#4299ff" stroke-width="9.5"/></svg>
<div class="b" style="left:4500.8px;top:1801.56px;width:64.4px;height:64.4px;background:#ffeef3;border-radius:12px;"></div>
<svg class="b" style="left:4500.8px;top:1801.56px;width:64px;height:64px;" viewBox="0 0 160 160"><path d="M41 40H126L114 123H54Z" fill="#fff" fill-opacity=".6" stroke="#f8305f" stroke-width="7.5" stroke-linejoin="round"/><path d="M36 38H131" stroke="#f8285a" stroke-width="8" stroke-linecap="round"/><path d="M72 27H96" stroke="#f8285a" stroke-width="10" stroke-linecap="round"/><path d="M84 64V100" stroke="#f9527a" stroke-width="16" stroke-linecap="round"/></svg>
<div class="b" style="left:136.6px;top:1898.37px;width:34.4px;height:34.4px;background:#fff;border-radius:8.8px;box-shadow:inset 0 0 0 3.2px #c3c7ce;"></div>
<span class="t" style="left:246.4px;top:1899.9px;font-size:33.2px;color:#44474c;transform:skewX(-0.3deg) scaleX(0.8905);">apLicenseNoConnectivityAlert</span>
<div class="b" style="left:891.6px;top:1897.38px;width:102.4px;height:44.4px;background:#1b1b1b;border-radius:10.4px;"></div>
<span class="t" style="left:905.2px;top:1907.5px;font-size:24px;color:#fff;font-weight:700;transform:skewX(-0.3deg) scaleX(0.9292);">Critical</span>
<span class="t" style="left:1465.2px;top:1899.9px;font-size:33.2px;color:#44474c;transform:skewX(-0.3deg) scaleX(0.9175);">Ack-ed</span>
<span class="t" style="left:2045.2px;top:1899.9px;font-size:33.2px;color:#1b84ff;transform:skewX(-0.3deg);-webkit-text-stroke:0.48px #1b84ff;">2</span>
<span class="t" style="left:2625.2px;top:1899.9px;font-size:33.2px;color:#44474c;transform:skewX(-0.3deg) scaleX(0.8924);">Unnamed site</span>
<span class="t" style="left:3262.8px;top:1899.9px;font-size:33.2px;color:#44474c;transform:skewX(-0.3deg) scaleX(0.8796);">Mar 18, 2024 11:10:20 am</span>
<span class="t" style="left:3841.6px;top:1899.9px;font-size:33.2px;color:#44474c;transform:skewX(-0.3deg) scaleX(0.8796);">Mar 18, 2024 11:12:04 am</span>
<div class="b" style="left:4424px;top:1887.78px;width:62.4px;height:64.4px;background:#e9f3ff;border-radius:12px;"></div>
<svg class="b" style="left:4424px;top:1887.78px;width:62.4px;height:64px;" viewBox="0 0 156 160"><path d="M27 68V28H66M90 28H129V68M129 92V131H90M66 131H27V92" fill="none" stroke="#4299ff" stroke-width="9.5"/></svg>
<div class="b" style="left:4500.8px;top:1887.78px;width:64.4px;height:64.4px;background:#ffeef3;border-radius:12px;"></div>
<svg class="b" style="left:4500.8px;top:1887.78px;width:64px;height:64px;" viewBox="0 0 160 160"><path d="M41 40H126L114 123H54Z" fill="#fff" fill-opacity=".6" stroke="#f8305f" stroke-width="7.5" stroke-linejoin="round"/><path d="M36 38H131" stroke="#f8285a" stroke-width="8" stroke-linecap="round"/><path d="M72 27H96" stroke="#f8285a" stroke-width="10" stroke-linecap="round"/><path d="M84 64V100" stroke="#f9527a" stroke-width="16" stroke-linecap="round"/></svg>
<div class="b" style="left:136.6px;top:1984.59px;width:34.4px;height:34.4px;background:#fff;border-radius:8.8px;box-shadow:inset 0 0 0 3.2px #c3c7ce;"></div>
<span class="t" style="left:246.4px;top:1983.9px;font-size:33.2px;color:#44474c;transform:skewX(-0.3deg) scaleX(0.8905);">apLicenseNoConnectivityAlert</span>
<div class="b" style="left:891.6px;top:1983.6px;width:102.4px;height:44.4px;background:#1b1b1b;border-radius:10.4px;"></div>
<span class="t" style="left:905.2px;top:1991.5px;font-size:24px;color:#fff;font-weight:700;transform:skewX(-0.3deg) scaleX(0.9292);">Critical</span>
<span class="t" style="left:1465.2px;top:1983.9px;font-size:33.2px;color:#44474c;transform:skewX(-0.3deg) scaleX(0.9175);">Ack-ed</span>
<span class="t" style="left:2045.2px;top:1983.9px;font-size:33.2px;color:#1b84ff;transform:skewX(-0.3deg);-webkit-text-stroke:0.48px #1b84ff;">1</span>
<span class="t" style="left:2625.2px;top:1983.9px;font-size:33.2px;color:#44474c;transform:skewX(-0.3deg) scaleX(0.8924);">Unnamed site</span>
<span class="t" style="left:3262.8px;top:1983.9px;font-size:33.2px;color:#44474c;transform:skewX(-0.3deg) scaleX(0.8796);">Mar 18, 2024 11:30:43 am</span>
<span class="t" style="left:3841.6px;top:1983.9px;font-size:33.2px;color:#44474c;transform:skewX(-0.3deg) scaleX(0.8796);">Mar 18, 2024 11:30:43 am</span>
<div class="b" style="left:4424px;top:1974px;width:62.4px;height:64.4px;background:#e9f3ff;border-radius:12px;"></div>
<svg class="b" style="left:4424px;top:1974px;width:62.4px;height:64px;" viewBox="0 0 156 160"><path d="M27 68V28H66M90 28H129V68M129 92V131H90M66 131H27V92" fill="none" stroke="#4299ff" stroke-width="9.5"/></svg>
<div class="b" style="left:4500.8px;top:1974px;width:64.4px;height:64.4px;background:#ffeef3;border-radius:12px;"></div>
<svg class="b" style="left:4500.8px;top:1974px;width:64px;height:64px;" viewBox="0 0 160 160"><path d="M41 40H126L114 123H54Z" fill="#fff" fill-opacity=".6" stroke="#f8305f" stroke-width="7.5" stroke-linejoin="round"/><path d="M36 38H131" stroke="#f8285a" stroke-width="8" stroke-linecap="round"/><path d="M72 27H96" stroke="#f8285a" stroke-width="10" stroke-linecap="round"/><path d="M84 64V100" stroke="#f9527a" stroke-width="16" stroke-linecap="round"/></svg>
<div class="b" style="left:136.6px;top:2070.81px;width:34.4px;height:34.4px;background:#fff;border-radius:8.8px;box-shadow:inset 0 0 0 3.2px #c3c7ce;"></div>
<span class="t" style="left:246.4px;top:2071.9px;font-size:33.2px;color:#44474c;transform:skewX(-0.3deg) scaleX(0.8905);">apLicenseNoConnectivityAlert</span>
<div class="b" style="left:891.6px;top:2069.82px;width:102.4px;height:44.4px;background:#1b1b1b;border-radius:10.4px;"></div>
<span class="t" style="left:905.2px;top:2079.5px;font-size:24px;color:#fff;font-weight:700;transform:skewX(-0.3deg) scaleX(0.9292);">Critical</span>
<span class="t" style="left:1465.2px;top:2071.9px;font-size:33.2px;color:#44474c;transform:skewX(-0.3deg) scaleX(0.9175);">Ack-ed</span>
<span class="t" style="left:2045.2px;top:2071.9px;font-size:33.2px;color:#1b84ff;transform:skewX(-0.3deg);-webkit-text-stroke:0.48px #1b84ff;">2</span>
<span class="t" style="left:2625.2px;top:2071.9px;font-size:33.2px;color:#44474c;transform:skewX(-0.3deg) scaleX(0.8924);">Unnamed site</span>
<span class="t" style="left:3262.8px;top:2071.9px;font-size:33.2px;color:#44474c;transform:skewX(-0.3deg) scaleX(0.8796);">Mar 18, 2024 11:41:21 am</span>
<span class="t" style="left:3841.6px;top:2071.9px;font-size:33.2px;color:#44474c;transform:skewX(-0.3deg) scaleX(0.8796);">Mar 18, 2024 11:43:05 am</span>
<div class="b" style="left:4424px;top:2060.22px;width:62.4px;height:64.4px;background:#e9f3ff;border-radius:12px;"></div>
<svg class="b" style="left:4424px;top:2060.22px;width:62.4px;height:64px;" viewBox="0 0 156 160"><path d="M27 68V28H66M90 28H129V68M129 92V131H90M66 131H27V92" fill="none" stroke="#4299ff" stroke-width="9.5"/></svg>
<div class="b" style="left:4500.8px;top:2060.22px;width:64.4px;height:64.4px;background:#ffeef3;border-radius:12px;"></div>
<svg class="b" style="left:4500.8px;top:2060.22px;width:64px;height:64px;" viewBox="0 0 160 160"><path d="M41 40H126L114 123H54Z" fill="#fff" fill-opacity=".6" stroke="#f8305f" stroke-width="7.5" stroke-linejoin="round"/><path d="M36 38H131" stroke="#f8285a" stroke-width="8" stroke-linecap="round"/><path d="M72 27H96" stroke="#f8285a" stroke-width="10" stroke-linecap="round"/><path d="M84 64V100" stroke="#f9527a" stroke-width="16" stroke-linecap="round"/></svg>
<div class="b" style="left:3983.2px;top:16.8px;width:861.6px;height:252.8px;background:#dffde9;border-radius:10.4px;box-shadow:0 6px 40px rgba(0,0,0,.17);z-index:5;"><div class="b" style="left:0;top:0;width:69.6px;height:100%;background:#1dc455;border-radius:10.4px 0 0 10.4px;"></div></div>
<svg class="b" style="left:3999.2px;top:124px;width:38.4px;height:33.04px;z-index:6;" viewBox="0 0 86 74"><path d="M8 38L30 60L78 10" fill="none" stroke="#fff" stroke-width="13" stroke-linecap="round" stroke-linejoin="round"/></svg>
<span class="t" style="left:4081.2px;top:54.7px;font-size:29.6px;color:#4b5675;letter-spacing:1.85px;transform:skewX(-0.3deg);z-index:6;-webkit-text-stroke:0.4px #4b5675;">Your request is being processed in the</span>
<span class="t" style="left:4081.2px;top:98.7px;font-size:29.6px;color:#4b5675;letter-spacing:1.95px;transform:skewX(-0.3deg);z-index:6;-webkit-text-stroke:0.4px #4b5675;">background. You can view the updates by</span>
<span class="t" style="left:4081.2px;top:146.7px;font-size:29.6px;color:#4b5675;letter-spacing:1.87px;transform:skewX(-0.3deg);z-index:6;-webkit-text-stroke:0.4px #4b5675;">refreshing the page.</span>
<span class="t" style="left:4081.2px;top:203.4px;font-size:29.2px;color:#7e879f;letter-spacing:1.34px;transform:skewX(-0.3deg);z-index:6;">Click on this notification to close it.</span>
<div class="b" style="left:4870.4px;top:0px;width:19.6px;height:2344px;background:#232323;z-index:9;"></div>
<div class="b" style="left:4870.4px;top:0px;width:5.2px;height:2344px;background:#0a0a0a;z-index:10;"></div>
<div class="b" style="left:4858px;top:0px;width:12.4px;height:2344px;z-index:8;background:linear-gradient(90deg,rgba(0,0,0,0),rgba(0,0,0,.05));"></div>
</div></body></html>
